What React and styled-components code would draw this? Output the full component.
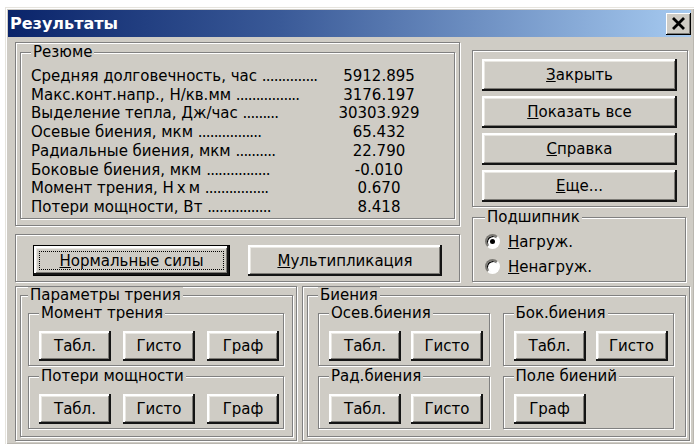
import React from "react";
import styled, { createGlobalStyle } from "styled-components";

const face = "#cfccc5";

const GlobalStyle = createGlobalStyle`
  html, body {
    margin: 0;
    padding: 0;
    background: #fff;
  }
  body {
    font-family: "DejaVu Sans", "Liberation Sans", sans-serif;
    font-size: 15px;
    color: #000;
  }
`;

const Window = styled.div`
  box-sizing: border-box;
  margin: 7px 0 0 5px;
  width: 689px;
  height: 437px;
  padding: 3px;
  display: flex;
  flex-direction: column;
  background: ${face};
  box-shadow: inset 1px 1px #e6e4de, inset 2px 2px #fff, inset -1px -1px #b9b6af;
`;

const TitleBar = styled.div`
  flex: none;
  height: 27px;
  padding: 0 0 0 2px;
  display: flex;
  align-items: center;
  justify-content: space-between;
  background: linear-gradient(90deg, #0a246a 0%, #3a5a98 40%, #a6caf0 100%);
`;

const Title = styled.span`
  color: #fff;
  font-weight: bold;
  font-size: 16px;
  line-height: 27px;
`;

const CloseButton = styled.button`
  box-sizing: border-box;
  width: 25px;
  height: 22px;
  padding: 0;
  border: none;
  display: flex;
  align-items: center;
  justify-content: center;
  background: ${face};
  box-shadow: inset -1px -1px #000, inset 1px 1px #fff, inset -2px -2px #7d7b76;
`;

const Client = styled.div`
  flex: 1;
  display: flex;
  flex-direction: column;
  gap: 4px;
  padding: 5px 0 0 7px;
`;

const Row = styled.div`
  display: flex;
  gap: ${(p) => p.$gap}px;
  flex: ${(p) => (p.$grow ? 1 : "none")};
`;

const Column = styled.div`
  display: flex;
  flex-direction: column;
  width: ${(p) => (p.$w ? `${p.$w}px` : "auto")};
  gap: ${(p) => p.$gap}px;
  padding-top: ${(p) => p.$top || 0}px;
`;

const Panel = styled.div`
  box-sizing: border-box;
  display: flex;
  flex-direction: ${(p) => (p.$row ? "row" : "column")};
  gap: ${(p) => p.$gap || 0}px;
  width: ${(p) => (p.$w ? `${p.$w}px` : "auto")};
  height: ${(p) => (p.$h ? `${p.$h}px` : "auto")};
  padding: ${(p) => p.$pad};
  border: 1px solid #808080;
  box-shadow: inset 1px 1px #fff, 1px 1px #fff;
`;

const Group = styled.fieldset`
  box-sizing: border-box;
  margin: 0;
  min-width: 0;
  width: ${(p) => (p.$w ? `${p.$w}px` : "auto")};
  flex: ${(p) => (p.$grow ? 1 : "none")};
  padding: ${(p) => p.$pad || "10px 10px 4px 10px"};
  border: 1px solid #808080;
  box-shadow: inset 1px 1px #fff, 1px 1px #fff;
`;

const Legend = styled.legend`
  padding: 0 2px;
  line-height: 16px;
  background: ${face};
`;

const Summary = styled.div`
  display: grid;
  grid-template-columns: 300px 96px;
  padding-top: 7px;
  line-height: 18.7px;
`;

const Label = styled.span`
  white-space: nowrap;
`;

const Dots = styled.span`
  letter-spacing: -0.8px;
`;

const Value = styled.span`
  text-align: center;
`;

const Button = styled.button`
  box-sizing: border-box;
  flex: none;
  width: ${(p) => (p.$w ? `${p.$w}px` : "auto")};
  height: ${(p) => p.$h || 30}px;
  padding: 0;
  border: none;
  font: inherit;
  color: #000;
  background: ${face};
  box-shadow: inset -2px -2px #141414, inset 2px 2px #fff,
    inset -3px -3px #7d7b76, inset 3px 3px #e9e7e2;
`;

const DefaultButton = styled(Button)`
  position: relative;
  border: 1px solid #000;

  &::after {
    content: "";
    position: absolute;
    inset: 5px;
    border: 1px dotted #000;
  }
`;

const ButtonRow = styled.div`
  display: flex;
  gap: ${(p) => p.$gap}px;
`;

const RunoutGrid = styled.div`
  display: grid;
  grid-template-columns: 1fr 1fr;
  gap: 2px 13px;
  padding-top: 2px;
`;

const Radio = styled.label`
  display: flex;
  align-items: center;
  gap: 8px;
  height: 25px;
`;

const RadioMark = styled.span`
  box-sizing: border-box;
  width: 15px;
  height: 15px;
  border-radius: 50%;
  border: 2px solid;
  border-color: #7a7873 #fff #fff #7a7873;
  background: #fff;
  box-shadow: inset 1px 1px #000;
  display: flex;
  align-items: center;
  justify-content: center;

  &::after {
    content: "";
    width: 5px;
    height: 5px;
    border-radius: 50%;
    background: ${(p) => (p.$checked ? "#000" : "transparent")};
  }
`;

const summary = [
  ["Средняя долговечность, час", 14, "5912.895"],
  ["Макс.конт.напр., Н/кв.мм", 16, "3176.197"],
  ["Выделение тепла, Дж/час", 9, "30303.929"],
  ["Осевые биения, мкм", 16, "65.432"],
  ["Радиальные биения, мкм", 10, "22.790"],
  ["Боковые биения, мкм", 16, "-0.010"],
  ["Момент трения, Н\u2009х\u2009м", 16, "0.670"],
  ["Потери мощности, Вт", 16, "8.418"],
];

const friction = [
  { title: "Момент трения", buttons: ["Табл.", "Гисто", "Граф"] },
  { title: "Потери мощности", buttons: ["Табл.", "Гисто", "Граф"] },
];

const runout = [
  { title: "Осев.биения", buttons: ["Табл.", "Гисто"] },
  { title: "Бок.биения", buttons: ["Табл.", "Гисто"] },
  { title: "Рад.биения", buttons: ["Табл.", "Гисто"] },
  { title: "Поле биений", buttons: ["Граф"] },
];

// first letter of a caption is the keyboard accelerator
const Accel = ({ children }) => (
  <>
    <u>{children[0]}</u>
    {children.slice(1)}
  </>
);

const ToolGroup = ({ title, buttons, gap }) => (
  <Group>
    <Legend>{title}</Legend>
    <ButtonRow $gap={gap}>
      {buttons.map((b) => (
        <Button key={b} $w={72}>
          {b}
        </Button>
      ))}
    </ButtonRow>
  </Group>
);

export default function App() {
  return (
    <>
      <GlobalStyle />
      <Window>
        <TitleBar>
          <Title>Результаты</Title>
          <CloseButton>
            <svg width="15" height="13" viewBox="0 0 15 13">
              <path d="M2 1 L13 12 M13 1 L2 12" stroke="#000" strokeWidth="2.8" />
            </svg>
          </CloseButton>
        </TitleBar>

        <Client>
          <Row $gap={12}>
            <Column $w={445} $gap={8}>
              <Panel $h={184} $pad="1px 4px 6px 4px">
                <Group $grow $pad="0 10px 0 10px">
                  <Legend>Резюме</Legend>
                  <Summary>
                    {summary.map(([label, dots, value]) => (
                      <React.Fragment key={label}>
                        <Label>
                          {label} <Dots>{".".repeat(dots)}</Dots>
                        </Label>
                        <Value>{value}</Value>
                      </React.Fragment>
                    ))}
                  </Summary>
                </Group>
              </Panel>
              <Panel $row $h={48} $gap={18} $pad="10px 17px 0">
                <DefaultButton $w={197} $h={31}>
                  <Accel>Нормальные силы</Accel>
                </DefaultButton>
                <Button $w={194} $h={31}>
                  <Accel>Мультипликация</Accel>
                </Button>
              </Panel>
            </Column>

            <Column $w={216} $gap={2} $top={8}>
              <Panel $h={157} $gap={5} $pad="8px 10px 0 9px">
                {["Закрыть", "Показать все", "Справка", "Еще..."].map((t) => (
                  <Button key={t} $h={32}>
                    <Accel>{t}</Accel>
                  </Button>
                ))}
              </Panel>
              <Group $w={214} $pad="4px 10px 2px 12px">
                <Legend>Подшипник</Legend>
                <Radio>
                  <RadioMark $checked />
                  <span>
                    <Accel>Нагруж.</Accel>
                  </span>
                </Radio>
                <Radio>
                  <RadioMark />
                  <span>
                    <Accel>Ненагруж.</Accel>
                  </span>
                </Radio>
              </Group>
            </Column>
          </Row>

          <Row $gap={5} $grow>
            <Panel $w={282} $pad="0 3px 3px 4px">
              <Group $grow $pad="0 8px 3px 7px">
                <Legend>Параметры трения</Legend>
                <Column $gap={2} $top={2}>
                  {friction.map((g) => (
                    <ToolGroup key={g.title} {...g} gap={12} />
                  ))}
                </Column>
              </Group>
            </Panel>
            <Panel $w={388} $pad="0 3px 3px 4px">
              <Group $grow $pad="0 11px 3px 10px">
                <Legend>Биения</Legend>
                <RunoutGrid>
                  {runout.map((g) => (
                    <ToolGroup key={g.title} {...g} gap={10} />
                  ))}
                </RunoutGrid>
              </Group>
            </Panel>
          </Row>
        </Client>
      </Window>
    </>
  );
}
